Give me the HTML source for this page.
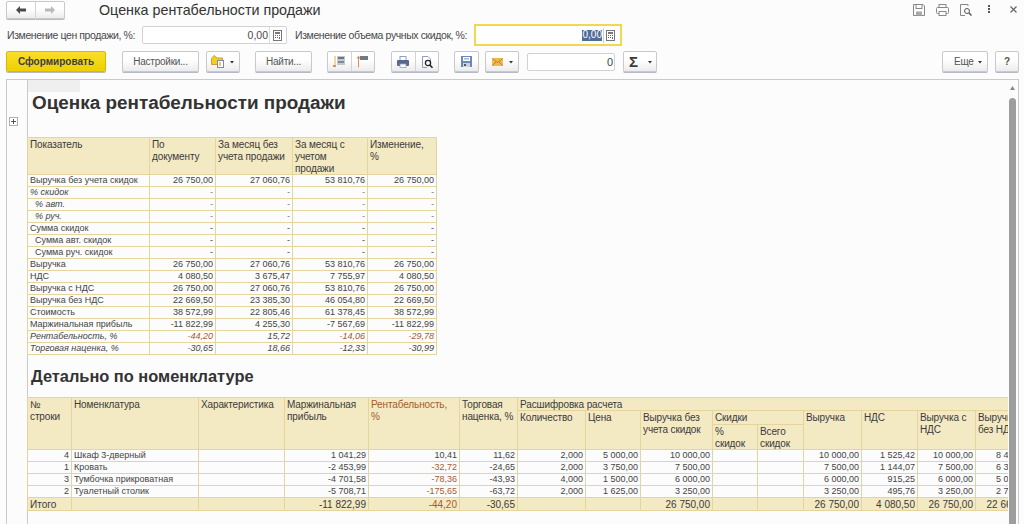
<!DOCTYPE html>
<html><head><meta charset="utf-8">
<style>
*{box-sizing:border-box}
html,body{margin:0;padding:0}
body{width:1024px;height:524px;overflow:hidden;position:relative;background:#fcfcfc;font-family:"Liberation Sans",sans-serif;color:#3b3b3b}
.ln{position:absolute}
.t{position:absolute;white-space:nowrap;line-height:12px}
.h{font-size:10px;letter-spacing:-0.12px}
.b{font-size:9px;color:#444}
.i{font-style:italic}
.br{color:#a75a2e}
.tot{font-size:10px}
.btn{position:absolute;border:1px solid #c9c9c9;border-radius:2px;background:linear-gradient(#ffffff 40%,#ececec);box-shadow:0 1px 0 #b3bac6;font-size:10px;letter-spacing:-0.25px;color:#555;text-align:center}
.inp{position:absolute;border:1px solid #d2d2d2;border-radius:2px;background:#fff}
</style></head><body>

<div class="btn" style="left:6px;top:1px;width:59px;height:18px"></div>
<div class="ln" style="left:35px;top:2px;width:1px;height:18px;background:#d4d4d4"></div>
<svg style="position:absolute;left:15px;top:5px" width="12" height="10" viewBox="0 0 12 10"><path d="M1 5 L5 1 L5 3.6 L11 3.6 L11 6.4 L5 6.4 L5 9 Z" fill="#4a4a4a"/></svg>
<svg style="position:absolute;left:44px;top:5px" width="12" height="10" viewBox="0 0 12 10"><path d="M11 5 L7 1 L7 3.6 L1 3.6 L1 6.4 L7 6.4 L7 9 Z" fill="#b9b9b9"/></svg>
<div class="t " style="left:99px;top:1px;font-size:14.3px;line-height:18px;color:#333">Оценка рентабельности продажи</div>
<svg style="position:absolute;left:912px;top:3px" width="14" height="14" viewBox="0 0 14 14"><path d="M1.5 1.5 H11 L12.5 3 V12.5 H1.5 Z" fill="none" stroke="#888" stroke-width="1"/><rect x="4" y="1.5" width="6" height="4" fill="none" stroke="#888"/><rect x="4" y="8.5" width="6" height="4" fill="#aaa"/></svg>
<svg style="position:absolute;left:935px;top:3px" width="15" height="14" viewBox="0 0 15 14"><rect x="4" y="1.5" width="7" height="3" fill="none" stroke="#888"/><rect x="1.5" y="4.5" width="12" height="6" rx="1" fill="none" stroke="#888"/><rect x="4" y="8.5" width="7" height="4" fill="#fff" stroke="#888"/></svg>
<svg style="position:absolute;left:959px;top:3px" width="14" height="14" viewBox="0 0 14 14"><path d="M1.5 1.5 H9 V3 M1.5 1.5 V12.5 H6" fill="none" stroke="#888"/><circle cx="8" cy="8" r="2.5" fill="none" stroke="#555"/><path d="M10 10 L12.5 12.5" stroke="#555" stroke-width="1.5"/></svg>
<div class="ln" style="left:988px;top:5px;width:2px;height:2px;background:#555"></div>
<div class="ln" style="left:988px;top:8px;width:2px;height:2px;background:#555"></div>
<div class="ln" style="left:988px;top:11px;width:2px;height:2px;background:#555"></div>
<svg style="position:absolute;left:1010px;top:6px" width="7" height="7" viewBox="0 0 7 7"><path d="M0.5 0.5 L6.5 6.5 M6.5 0.5 L0.5 6.5" stroke="#666" stroke-width="1.2"/></svg>
<div class="t " style="left:7px;top:29px;font-size:10.5px;line-height:12px;color:#4a4a4a;letter-spacing:-0.4px">Изменение цен продажи, %:</div>
<div class="inp" style="left:142px;top:26px;width:145px;height:18px"></div>
<div class="ln" style="left:269px;top:27px;width:1px;height:16px;background:#dcdcdc"></div>
<div class="t r " style="right:756px;top:29px;font-size:10.5px;color:#4a4a4a">0,00</div>
<svg style="position:absolute;left:273px;top:30px" width="9" height="11" viewBox="0 0 9 11"><rect x="0.5" y="0.5" width="8" height="10" fill="#fff" stroke="#777"/><rect x="2" y="2" width="5" height="2" fill="#777"/><rect x="2" y="5" width="1" height="1" fill="#666"/><rect x="4" y="5" width="1" height="1" fill="#666"/><rect x="6" y="5" width="1" height="1" fill="#666"/><rect x="2" y="7" width="1" height="1" fill="#666"/><rect x="4" y="7" width="1" height="1" fill="#666"/><rect x="6" y="7" width="1" height="2" fill="#666"/><rect x="2" y="9" width="4" height="0.01" fill="#666"/></svg>
<div class="t " style="left:295px;top:29px;font-size:10.5px;line-height:12px;color:#4a4a4a;letter-spacing:-0.4px">Изменение объема ручных скидок, %:</div>
<div class="ln" style="left:474px;top:24px;width:148px;height:22px;border:2px solid #f2d84e;background:#fff"></div>
<div class="ln" style="left:603px;top:28px;width:1px;height:15px;background:#cfcfcf"></div>
<div class="ln" style="left:582px;top:30px;width:20px;height:11px;background:#4f6d99"></div>
<div class="t r " style="right:422px;top:29px;font-size:10px;color:#fff">0,00</div>
<svg style="position:absolute;left:606px;top:30px" width="9" height="11" viewBox="0 0 9 11"><rect x="0.5" y="0.5" width="8" height="10" fill="#fff" stroke="#777"/><rect x="2" y="2" width="5" height="2" fill="#777"/><rect x="2" y="5" width="1" height="1" fill="#666"/><rect x="4" y="5" width="1" height="1" fill="#666"/><rect x="6" y="5" width="1" height="1" fill="#666"/><rect x="2" y="7" width="1" height="1" fill="#666"/><rect x="4" y="7" width="1" height="1" fill="#666"/><rect x="6" y="7" width="1" height="2" fill="#666"/><rect x="2" y="9" width="4" height="0.01" fill="#666"/></svg>
<div class="btn" style="left:6px;top:51px;width:100px;height:21px;background:linear-gradient(#f9de2b,#efd000);border-color:#d9b900;font-weight:bold;line-height:19px;color:#3d3d48;letter-spacing:0">Сформировать</div>
<div class="btn" style="left:122px;top:51px;width:77px;height:21px;line-height:19px">Настройки...</div>
<div class="btn" style="left:206px;top:51px;width:34px;height:21px"></div>
<div class="btn" style="left:255px;top:51px;width:57px;height:21px;line-height:19px">Найти...</div>
<div class="btn" style="left:327px;top:51px;width:48px;height:21px"></div>
<div class="ln" style="left:351px;top:52px;width:1px;height:19px;background:#d4d4d4"></div>
<div class="btn" style="left:391px;top:51px;width:48px;height:21px"></div>
<div class="ln" style="left:415px;top:52px;width:1px;height:19px;background:#d4d4d4"></div>
<div class="btn" style="left:454px;top:51px;width:25px;height:21px"></div>
<div class="btn" style="left:485px;top:51px;width:34px;height:21px"></div>
<div class="inp" style="left:527px;top:53px;width:88px;height:18px"></div>
<div class="t r " style="right:411px;top:55px;font-size:11px;line-height:14px;color:#444">0</div>
<div class="btn" style="left:623px;top:51px;width:34px;height:21px"></div>
<div class="btn" style="left:942px;top:51px;width:46px;height:21px;line-height:19px;text-align:left;padding-left:11px">Еще</div>
<div class="btn" style="left:995px;top:51px;width:24px;height:21px;line-height:19px;font-weight:bold">?</div>
<svg style="position:absolute;left:210px;top:54px" width="16" height="15" viewBox="0 0 16 15"><path d="M1.5 4.5 L4 1.5 L7 4 L12.5 4 L12.5 10.5 L1.5 10.5 Z" fill="#f3cf1c" stroke="#d59a3a" stroke-width="1"/><rect x="7.5" y="6.5" width="6" height="7" fill="#fff" stroke="#7b8aa8"/><rect x="9" y="8" width="2" height="4" fill="#e8c870"/></svg>
<svg style="position:absolute;left:230px;top:61px" width="4" height="3"><path d="M0 0 H4 L2 2.5Z" fill="#333"/></svg>
<div class="ln" style="left:334px;top:56px;width:2px;height:11px;background:#ecd9a6"></div>
<div class="ln" style="left:333px;top:65px;width:3px;height:2px;background:#e0905a"></div>
<div class="ln" style="left:337px;top:56px;width:8px;height:9px;background:#c3c8cf"></div>
<div class="ln" style="left:338px;top:57px;width:6px;height:2px;background:#6b7583"></div>
<div class="ln" style="left:338px;top:61px;width:6px;height:2px;background:#7d8a9b"></div>
<svg style="position:absolute;left:356px;top:55px" width="5" height="13"><path d="M2.5 0.5 L4.5 3.5 H3 V12.5 H2 V3.5 H0.5Z" fill="#dc8c5c"/></svg>
<div class="ln" style="left:360px;top:56px;width:8px;height:4px;background:#737a84"></div>
<svg style="position:absolute;left:397px;top:56px" width="12" height="12" viewBox="0 0 12 12"><rect x="3" y="0.5" width="6" height="4" fill="#fff" stroke="#8da0c0"/><rect x="0" y="4" width="12" height="6" rx="1" fill="#56688c"/><rect x="3" y="8" width="6" height="3.5" fill="#fff" stroke="#8da0c0" stroke-width="0.8"/></svg>
<svg style="position:absolute;left:421px;top:55px" width="13" height="14" viewBox="0 0 13 14"><path d="M1.5 1.5 H7 L9.5 4 V8 M1.5 1.5 V12.5 H6" fill="none" stroke="#8da0c0"/><circle cx="7" cy="8" r="2.6" fill="#fff" stroke="#222" stroke-width="1.3"/><path d="M8.8 10 L11.5 12.8" stroke="#222" stroke-width="1.6"/></svg>
<svg style="position:absolute;left:461px;top:56px" width="12" height="11" viewBox="0 0 12 11"><rect x="0" y="0" width="11" height="11" fill="#6c88b6"/><rect x="2" y="1" width="7" height="4" fill="#fff"/><rect x="3" y="2" width="5" height="1.5" fill="#9fb3d2"/><rect x="2" y="7" width="7" height="4" fill="#c9d2e0"/><rect x="3" y="8" width="2" height="2" fill="#556"/></svg>
<svg style="position:absolute;left:492px;top:58px" width="11" height="8" viewBox="0 0 11 8"><rect x="0" y="0" width="11" height="8" rx="1" fill="#e9bd4a"/><path d="M0.5 0.5 L5.5 4.5 L10.5 0.5 M0.5 7.5 L4 4 M10.5 7.5 L7 4" fill="none" stroke="#c07a3c" stroke-width="1"/></svg>
<svg style="position:absolute;left:509px;top:61px" width="4" height="3"><path d="M0 0 H4 L2 2.5Z" fill="#333"/></svg>
<div class="t" style="left:629px;top:53px;font-size:15px;line-height:17px;font-weight:bold;color:#3a3a3a">&Sigma;</div>
<svg style="position:absolute;left:648px;top:61px" width="4" height="3"><path d="M0 0 H4 L2 2.5Z" fill="#333"/></svg>
<svg style="position:absolute;left:978px;top:61px" width="4" height="3"><path d="M0 0 H4 L2 2.5Z" fill="#333"/></svg>
<div class="ln" style="left:6px;top:79px;width:1013px;height:460px;border:1px solid #cacaca;background:#fcfcfc"></div>
<div class="ln" style="left:27px;top:80px;width:1px;height:445px;background:#cacaca"></div>
<div class="ln" style="left:28px;top:80px;width:52px;height:12px;background:#efefef"></div>
<div class="ln" style="left:1009px;top:98px;width:7px;height:440px;border-radius:3.5px;background:#9d9d9d"></div>
<svg style="position:absolute;left:1010px;top:86px" width="5" height="4"><path d="M2.5 0 L5 4 L0 4Z" fill="#888"/></svg>
<div class="ln" style="left:9px;top:117px;width:9px;height:9px;border:1px solid #b0b0b0;background:#fff"></div>
<div class="ln" style="left:11px;top:121px;width:5px;height:1px;background:#555"></div>
<div class="ln" style="left:13px;top:119px;width:1px;height:5px;background:#555"></div>
<div class="t " style="left:32px;top:91px;font-size:18.9px;line-height:24px;font-weight:bold;color:#333">Оценка рентабельности продажи</div>
<div class="ln" style="left:27px;top:137px;width:410px;height:38px;background:#f3e9c3"></div>
<div class="ln" style="left:27px;top:137px;width:410px;height:1px;background:#e4d49e"></div>
<div class="ln" style="left:27px;top:174px;width:410px;height:1px;background:#e4d49e"></div>
<div class="ln" style="left:27px;top:137px;width:1px;height:218px;background:#e4d49e"></div>
<div class="ln" style="left:149px;top:137px;width:1px;height:218px;background:#e4d49e"></div>
<div class="ln" style="left:215px;top:137px;width:1px;height:218px;background:#e4d49e"></div>
<div class="ln" style="left:292px;top:137px;width:1px;height:218px;background:#e4d49e"></div>
<div class="ln" style="left:367px;top:137px;width:1px;height:218px;background:#e4d49e"></div>
<div class="ln" style="left:436px;top:137px;width:1px;height:218px;background:#e4d49e"></div>
<div class="t h" style="left:30px;top:139px">Показатель</div>
<div class="t h" style="left:152px;top:139px">По<br>документу</div>
<div class="t h" style="left:218px;top:139px">За месяц без<br>учета продажи</div>
<div class="t h" style="left:295px;top:139px">За месяц с<br>учетом<br>продажи</div>
<div class="t h" style="left:370px;top:139px">Изменение,<br>%</div>
<div class="ln" style="left:27px;top:186px;width:410px;height:1px;background:#e4d49e"></div>
<div class="t b " style="left:30px;top:175px;line-height:11px">Выручка без учета скидок</div>
<div class="t b " style="right:811px;top:175px;line-height:11px">26 750,00</div>
<div class="t b " style="right:734px;top:175px;line-height:11px">27 060,76</div>
<div class="t b " style="right:659px;top:175px;line-height:11px">53 810,76</div>
<div class="t b " style="right:590px;top:175px;line-height:11px">26 750,00</div>
<div class="ln" style="left:27px;top:198px;width:410px;height:1px;background:#e4d49e"></div>
<div class="t b i" style="left:30px;top:187px;line-height:11px">% скидок</div>
<div class="t b i" style="right:811px;top:187px;line-height:11px">-</div>
<div class="t b i" style="right:734px;top:187px;line-height:11px">-</div>
<div class="t b i" style="right:659px;top:187px;line-height:11px">-</div>
<div class="t b i" style="right:590px;top:187px;line-height:11px">-</div>
<div class="ln" style="left:27px;top:210px;width:410px;height:1px;background:#e4d49e"></div>
<div class="t b i" style="left:30px;top:199px;line-height:11px">&nbsp;&nbsp;% авт.</div>
<div class="t b i" style="right:811px;top:199px;line-height:11px">-</div>
<div class="t b i" style="right:734px;top:199px;line-height:11px">-</div>
<div class="t b i" style="right:659px;top:199px;line-height:11px">-</div>
<div class="t b i" style="right:590px;top:199px;line-height:11px">-</div>
<div class="ln" style="left:27px;top:222px;width:410px;height:1px;background:#e4d49e"></div>
<div class="t b i" style="left:30px;top:211px;line-height:11px">&nbsp;&nbsp;% руч.</div>
<div class="t b i" style="right:811px;top:211px;line-height:11px">-</div>
<div class="t b i" style="right:734px;top:211px;line-height:11px">-</div>
<div class="t b i" style="right:659px;top:211px;line-height:11px">-</div>
<div class="t b i" style="right:590px;top:211px;line-height:11px">-</div>
<div class="ln" style="left:27px;top:234px;width:410px;height:1px;background:#e4d49e"></div>
<div class="t b " style="left:30px;top:223px;line-height:11px">Сумма скидок</div>
<div class="t b " style="right:811px;top:223px;line-height:11px">-</div>
<div class="t b " style="right:734px;top:223px;line-height:11px">-</div>
<div class="t b " style="right:659px;top:223px;line-height:11px">-</div>
<div class="t b " style="right:590px;top:223px;line-height:11px">-</div>
<div class="ln" style="left:27px;top:246px;width:410px;height:1px;background:#e4d49e"></div>
<div class="t b " style="left:30px;top:235px;line-height:11px">&nbsp;&nbsp;Сумма авт. скидок</div>
<div class="t b " style="right:811px;top:235px;line-height:11px">-</div>
<div class="t b " style="right:734px;top:235px;line-height:11px">-</div>
<div class="t b " style="right:659px;top:235px;line-height:11px">-</div>
<div class="t b " style="right:590px;top:235px;line-height:11px">-</div>
<div class="ln" style="left:27px;top:258px;width:410px;height:1px;background:#e4d49e"></div>
<div class="t b " style="left:30px;top:247px;line-height:11px">&nbsp;&nbsp;Сумма руч. скидок</div>
<div class="t b " style="right:811px;top:247px;line-height:11px">-</div>
<div class="t b " style="right:734px;top:247px;line-height:11px">-</div>
<div class="t b " style="right:659px;top:247px;line-height:11px">-</div>
<div class="t b " style="right:590px;top:247px;line-height:11px">-</div>
<div class="ln" style="left:27px;top:270px;width:410px;height:1px;background:#e4d49e"></div>
<div class="t b " style="left:30px;top:259px;line-height:11px">Выручка</div>
<div class="t b " style="right:811px;top:259px;line-height:11px">26 750,00</div>
<div class="t b " style="right:734px;top:259px;line-height:11px">27 060,76</div>
<div class="t b " style="right:659px;top:259px;line-height:11px">53 810,76</div>
<div class="t b " style="right:590px;top:259px;line-height:11px">26 750,00</div>
<div class="ln" style="left:27px;top:282px;width:410px;height:1px;background:#e4d49e"></div>
<div class="t b " style="left:30px;top:271px;line-height:11px">НДС</div>
<div class="t b " style="right:811px;top:271px;line-height:11px">4 080,50</div>
<div class="t b " style="right:734px;top:271px;line-height:11px">3 675,47</div>
<div class="t b " style="right:659px;top:271px;line-height:11px">7 755,97</div>
<div class="t b " style="right:590px;top:271px;line-height:11px">4 080,50</div>
<div class="ln" style="left:27px;top:294px;width:410px;height:1px;background:#e4d49e"></div>
<div class="t b " style="left:30px;top:283px;line-height:11px">Выручка с НДС</div>
<div class="t b " style="right:811px;top:283px;line-height:11px">26 750,00</div>
<div class="t b " style="right:734px;top:283px;line-height:11px">27 060,76</div>
<div class="t b " style="right:659px;top:283px;line-height:11px">53 810,76</div>
<div class="t b " style="right:590px;top:283px;line-height:11px">26 750,00</div>
<div class="ln" style="left:27px;top:306px;width:410px;height:1px;background:#e4d49e"></div>
<div class="t b " style="left:30px;top:295px;line-height:11px">Выручка без НДС</div>
<div class="t b " style="right:811px;top:295px;line-height:11px">22 669,50</div>
<div class="t b " style="right:734px;top:295px;line-height:11px">23 385,30</div>
<div class="t b " style="right:659px;top:295px;line-height:11px">46 054,80</div>
<div class="t b " style="right:590px;top:295px;line-height:11px">22 669,50</div>
<div class="ln" style="left:27px;top:318px;width:410px;height:1px;background:#e4d49e"></div>
<div class="t b " style="left:30px;top:307px;line-height:11px">Стоимость</div>
<div class="t b " style="right:811px;top:307px;line-height:11px">38 572,99</div>
<div class="t b " style="right:734px;top:307px;line-height:11px">22 805,46</div>
<div class="t b " style="right:659px;top:307px;line-height:11px">61 378,45</div>
<div class="t b " style="right:590px;top:307px;line-height:11px">38 572,99</div>
<div class="ln" style="left:27px;top:330px;width:410px;height:1px;background:#e4d49e"></div>
<div class="t b " style="left:30px;top:319px;line-height:11px">Маржинальная прибыль</div>
<div class="t b " style="right:811px;top:319px;line-height:11px">-11 822,99</div>
<div class="t b " style="right:734px;top:319px;line-height:11px">4 255,30</div>
<div class="t b " style="right:659px;top:319px;line-height:11px">-7 567,69</div>
<div class="t b " style="right:590px;top:319px;line-height:11px">-11 822,99</div>
<div class="ln" style="left:27px;top:342px;width:410px;height:1px;background:#e4d49e"></div>
<div class="t b i" style="left:30px;top:331px;line-height:11px">Рентабельность, %</div>
<div class="t b i br" style="right:811px;top:331px;line-height:11px">-44,20</div>
<div class="t b i" style="right:734px;top:331px;line-height:11px">15,72</div>
<div class="t b i br" style="right:659px;top:331px;line-height:11px">-14,06</div>
<div class="t b i br" style="right:590px;top:331px;line-height:11px">-29,78</div>
<div class="ln" style="left:27px;top:354px;width:410px;height:1px;background:#e4d49e"></div>
<div class="t b i" style="left:30px;top:343px;line-height:11px">Торговая наценка, %</div>
<div class="t b i" style="right:811px;top:343px;line-height:11px">-30,65</div>
<div class="t b i" style="right:734px;top:343px;line-height:11px">18,66</div>
<div class="t b i" style="right:659px;top:343px;line-height:11px">-12,33</div>
<div class="t b i" style="right:590px;top:343px;line-height:11px">-30,99</div>
<div style="position:absolute;left:0;top:0;width:1008px;height:524px;overflow:hidden">
<div class="t " style="left:31px;top:365px;font-size:16.4px;line-height:22px;font-weight:bold;color:#333">Детально по номенклатуре</div>
<div class="ln" style="left:27px;top:397px;width:981px;height:53px;background:#f3e9c3"></div>
<div class="ln" style="left:27px;top:397px;width:982px;height:1px;background:#e4d49e"></div>
<div class="ln" style="left:517px;top:410px;width:492px;height:1px;background:#e4d49e"></div>
<div class="ln" style="left:712px;top:424px;width:92px;height:1px;background:#e4d49e"></div>
<div class="ln" style="left:27px;top:449px;width:982px;height:1px;background:#e4d49e"></div>
<div class="ln" style="left:27px;top:397px;width:1px;height:114px;background:#e4d49e"></div>
<div class="ln" style="left:71px;top:397px;width:1px;height:114px;background:#e4d49e"></div>
<div class="ln" style="left:198px;top:397px;width:1px;height:114px;background:#e4d49e"></div>
<div class="ln" style="left:284px;top:397px;width:1px;height:114px;background:#e4d49e"></div>
<div class="ln" style="left:368px;top:397px;width:1px;height:114px;background:#e4d49e"></div>
<div class="ln" style="left:459px;top:397px;width:1px;height:114px;background:#e4d49e"></div>
<div class="ln" style="left:517px;top:397px;width:1px;height:114px;background:#e4d49e"></div>
<div class="ln" style="left:585px;top:410px;width:1px;height:101px;background:#e4d49e"></div>
<div class="ln" style="left:640px;top:410px;width:1px;height:101px;background:#e4d49e"></div>
<div class="ln" style="left:712px;top:410px;width:1px;height:101px;background:#e4d49e"></div>
<div class="ln" style="left:803px;top:410px;width:1px;height:101px;background:#e4d49e"></div>
<div class="ln" style="left:861px;top:410px;width:1px;height:101px;background:#e4d49e"></div>
<div class="ln" style="left:917px;top:410px;width:1px;height:101px;background:#e4d49e"></div>
<div class="ln" style="left:975px;top:410px;width:1px;height:101px;background:#e4d49e"></div>
<div class="ln" style="left:757px;top:424px;width:1px;height:87px;background:#e4d49e"></div>
<div class="t h" style="left:30px;top:399px">№<br>строки</div>
<div class="t h" style="left:74px;top:399px">Номенклатура</div>
<div class="t h" style="left:201px;top:399px">Характеристика</div>
<div class="t h" style="left:287px;top:399px">Маржинальная<br>прибыль</div>
<div class="t h" style="left:371px;top:399px"><span class="br">Рентабельность,<br>%</span></div>
<div class="t h" style="left:462px;top:399px">Торговая<br>наценка, %</div>
<div class="t h" style="left:520px;top:399px;">Расшифровка расчета</div>
<div class="t h" style="left:520px;top:412px">Количество</div>
<div class="t h" style="left:588px;top:412px">Цена</div>
<div class="t h" style="left:643px;top:412px">Выручка без<br>учета скидок</div>
<div class="t h" style="left:715px;top:412px">Скидки</div>
<div class="t h" style="left:806px;top:412px">Выручка</div>
<div class="t h" style="left:864px;top:412px">НДС</div>
<div class="t h" style="left:920px;top:412px">Выручка с<br>НДС</div>
<div class="t h" style="left:978px;top:412px">Выручка<br>без НДС</div>
<div class="t h" style="left:715px;top:426px">%<br>скидок</div>
<div class="t h" style="left:760px;top:426px">Всего<br>скидок</div>
<div class="ln" style="left:27px;top:461px;width:982px;height:1px;background:#e4d49e"></div>
<div class="t r b" style="right:939px;top:450px;line-height:11px">4</div>
<div class="t b" style="left:74px;top:450px;line-height:11px">Шкаф 3-дверный</div>
<div class="t b" style="right:642px;top:450px;line-height:11px">1 041,29</div>
<div class="t b" style="right:551px;top:450px;line-height:11px">10,41</div>
<div class="t b" style="right:493px;top:450px;line-height:11px">11,62</div>
<div class="t b" style="right:425px;top:450px;line-height:11px">2,000</div>
<div class="t b" style="right:370px;top:450px;line-height:11px">5 000,00</div>
<div class="t b" style="right:298px;top:450px;line-height:11px">10 000,00</div>
<div class="t b" style="right:149px;top:450px;line-height:11px">10 000,00</div>
<div class="t b" style="right:93px;top:450px;line-height:11px">1 525,42</div>
<div class="t b" style="right:35px;top:450px;line-height:11px">10 000,00</div>
<div class="t b" style="right:-23px;top:450px;line-height:11px">8 474,58</div>
<div class="ln" style="left:27px;top:473px;width:982px;height:1px;background:#e4d49e"></div>
<div class="t r b" style="right:939px;top:462px;line-height:11px">1</div>
<div class="t b" style="left:74px;top:462px;line-height:11px">Кровать</div>
<div class="t b" style="right:642px;top:462px;line-height:11px">-2 453,99</div>
<div class="t b br" style="right:551px;top:462px;line-height:11px">-32,72</div>
<div class="t b" style="right:493px;top:462px;line-height:11px">-24,65</div>
<div class="t b" style="right:425px;top:462px;line-height:11px">2,000</div>
<div class="t b" style="right:370px;top:462px;line-height:11px">3 750,00</div>
<div class="t b" style="right:298px;top:462px;line-height:11px">7 500,00</div>
<div class="t b" style="right:149px;top:462px;line-height:11px">7 500,00</div>
<div class="t b" style="right:93px;top:462px;line-height:11px">1 144,07</div>
<div class="t b" style="right:35px;top:462px;line-height:11px">7 500,00</div>
<div class="t b" style="right:-23px;top:462px;line-height:11px">6 355,93</div>
<div class="ln" style="left:27px;top:485px;width:982px;height:1px;background:#e4d49e"></div>
<div class="t r b" style="right:939px;top:474px;line-height:11px">3</div>
<div class="t b" style="left:74px;top:474px;line-height:11px">Тумбочка прикроватная</div>
<div class="t b" style="right:642px;top:474px;line-height:11px">-4 701,58</div>
<div class="t b br" style="right:551px;top:474px;line-height:11px">-78,36</div>
<div class="t b" style="right:493px;top:474px;line-height:11px">-43,93</div>
<div class="t b" style="right:425px;top:474px;line-height:11px">4,000</div>
<div class="t b" style="right:370px;top:474px;line-height:11px">1 500,00</div>
<div class="t b" style="right:298px;top:474px;line-height:11px">6 000,00</div>
<div class="t b" style="right:149px;top:474px;line-height:11px">6 000,00</div>
<div class="t b" style="right:93px;top:474px;line-height:11px">915,25</div>
<div class="t b" style="right:35px;top:474px;line-height:11px">6 000,00</div>
<div class="t b" style="right:-23px;top:474px;line-height:11px">5 084,75</div>
<div class="ln" style="left:27px;top:497px;width:982px;height:1px;background:#e4d49e"></div>
<div class="t r b" style="right:939px;top:486px;line-height:11px">2</div>
<div class="t b" style="left:74px;top:486px;line-height:11px">Туалетный столик</div>
<div class="t b" style="right:642px;top:486px;line-height:11px">-5 708,71</div>
<div class="t b br" style="right:551px;top:486px;line-height:11px">-175,65</div>
<div class="t b" style="right:493px;top:486px;line-height:11px">-63,72</div>
<div class="t b" style="right:425px;top:486px;line-height:11px">2,000</div>
<div class="t b" style="right:370px;top:486px;line-height:11px">1 625,00</div>
<div class="t b" style="right:298px;top:486px;line-height:11px">3 250,00</div>
<div class="t b" style="right:149px;top:486px;line-height:11px">3 250,00</div>
<div class="t b" style="right:93px;top:486px;line-height:11px">495,76</div>
<div class="t b" style="right:35px;top:486px;line-height:11px">3 250,00</div>
<div class="t b" style="right:-23px;top:486px;line-height:11px">2 754,24</div>
<div class="ln" style="left:28px;top:498px;width:980px;height:12px;background:#f3e9c3"></div>
<div class="ln" style="left:27px;top:510px;width:982px;height:1px;background:#e4d49e"></div>
<div class="ln" style="left:27px;top:497px;width:1px;height:14px;background:#e4d49e"></div>
<div class="ln" style="left:71px;top:497px;width:1px;height:14px;background:#e4d49e"></div>
<div class="ln" style="left:198px;top:497px;width:1px;height:14px;background:#e4d49e"></div>
<div class="ln" style="left:284px;top:497px;width:1px;height:14px;background:#e4d49e"></div>
<div class="ln" style="left:368px;top:497px;width:1px;height:14px;background:#e4d49e"></div>
<div class="ln" style="left:459px;top:497px;width:1px;height:14px;background:#e4d49e"></div>
<div class="ln" style="left:517px;top:497px;width:1px;height:14px;background:#e4d49e"></div>
<div class="ln" style="left:585px;top:497px;width:1px;height:14px;background:#e4d49e"></div>
<div class="ln" style="left:640px;top:497px;width:1px;height:14px;background:#e4d49e"></div>
<div class="ln" style="left:712px;top:497px;width:1px;height:14px;background:#e4d49e"></div>
<div class="ln" style="left:757px;top:497px;width:1px;height:14px;background:#e4d49e"></div>
<div class="ln" style="left:803px;top:497px;width:1px;height:14px;background:#e4d49e"></div>
<div class="ln" style="left:861px;top:497px;width:1px;height:14px;background:#e4d49e"></div>
<div class="ln" style="left:917px;top:497px;width:1px;height:14px;background:#e4d49e"></div>
<div class="ln" style="left:975px;top:497px;width:1px;height:14px;background:#e4d49e"></div>
<div class="t tot" style="left:30px;top:499px;">Итого</div>
<div class="t tot" style="right:642px;top:499px">-11 822,99</div>
<div class="t tot" style="right:551px;top:499px"><span class="br">-44,20</span></div>
<div class="t tot" style="right:493px;top:499px">-30,65</div>
<div class="t tot" style="right:298px;top:499px">26 750,00</div>
<div class="t tot" style="right:149px;top:499px">26 750,00</div>
<div class="t tot" style="right:93px;top:499px">4 080,50</div>
<div class="t tot" style="right:35px;top:499px">26 750,00</div>
<div class="t tot" style="right:-23px;top:499px">22 669,50</div>
</div>
</body></html>
